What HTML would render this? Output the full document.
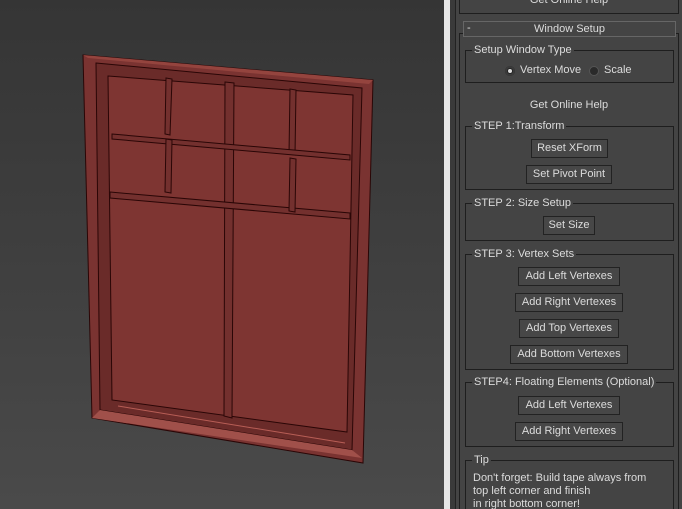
<!DOCTYPE html>
<html><head><style>
*{margin:0;padding:0;box-sizing:border-box}
html,body{width:682px;height:509px;overflow:hidden}
body{background:#444;font-family:"Liberation Sans",sans-serif;font-size:11px;color:#dcdcdc;position:relative}
.vp{position:absolute;left:0;top:0;width:444px;height:509px;background:linear-gradient(#353535 0%,#3f3f3f 50%,#4a4a4a 100%)}
.strip{position:absolute;left:444px;top:0;width:6px;height:509px;background:#e6e6e6}
.dk{position:absolute;left:450px;top:0;width:6px;height:509px;background:#3a3a3a;border-right:1px solid #222}
.b{position:absolute;border:1px solid #1e1e1e}
.g{position:absolute;border:1px solid #1e1e1e;left:465px;width:209px}
.g>.t{position:absolute;left:6px;top:-8px;background:#444;padding:0 2px;line-height:14px}
.btn{position:absolute;border:1px solid #222;background:#474747;text-align:center;line-height:17px;height:19px}
.c{position:absolute;text-align:center}
</style></head><body>
<div class="vp">
<svg width="444" height="509">
<polygon points="83,55 373,80 363,463 92,418" fill="#7a3331" stroke="#2a0606" stroke-width="1"/>
<polygon points="83,55 373,80 369,84 88,58" fill="#94443e"/>
<polygon points="96,63 362,88 352,450 100,410" fill="#6a2b29" stroke="#2a0606"/>
<polygon points="100,410 352,450 362,458 92,418" fill="#a0504a"/>
<polygon points="108,76 353,95 347,432 112,400" fill="#7e3532" stroke="#2a0606"/>
<g stroke="#2a0606" fill="#73302e">
<polygon points="225,82 234,83 232,418 224,416"/>
<polygon points="166,78 172,79 170,135 165,134"/>
<polygon points="290,89 296,90 295,155 289,154"/>
<polygon points="112,134 350,155 350,160 112,139"/>
<polygon points="110,192 350,213 350,219 110,198"/>
<polygon points="166,139 172,140 171,193 165,192"/>
<polygon points="290,158 296,159 295,212 289,211"/>
</g>
<line x1="118" y1="406" x2="345" y2="443" stroke="#b85e56"/>
</svg>
</div>
<div class="strip"></div><div class="dk"></div>
<div class="b" style="left:459px;top:-2px;width:220px;height:16px"></div>
<div class="c" style="left:459px;top:-6px;width:220px">Get Online Help</div>
<div style="position:absolute;left:459px;top:33px;width:220px;height:480px;border:1px solid #1e1e1e;border-bottom:none"></div>
<div class="b" style="left:463px;top:21px;width:213px;height:16px;background:#444;border-color:#666"></div>
<div style="position:absolute;left:467px;top:22px">-</div>
<div class="c" style="left:463px;top:23px;width:213px">Window Setup</div>
<div class="g" style="top:50px;height:33px"><span class="t">Setup Window Type</span></div>
<div style="position:absolute;left:505px;top:66px;width:10px;height:10px;border-radius:50%;background:#222;box-shadow:inset 0 0 0 2px #3a3a3a"><div style="margin:3px;width:4px;height:4px;border-radius:50%;background:#ddd"></div></div>
<div style="position:absolute;left:520px;top:64px">Vertex Move</div>
<div style="position:absolute;left:589px;top:66px;width:10px;height:10px;border-radius:50%;background:#2a2a2a;border:1px solid #555"></div>
<div style="position:absolute;left:604px;top:64px">Scale</div>
<div class="c" style="left:459px;top:99px;width:220px">Get Online Help</div>
<div class="g" style="top:126px;height:64px"><span class="t">STEP 1:Transform</span></div>
<div class="btn" style="left:531px;top:139px;width:77px">Reset XForm</div>
<div class="btn" style="left:526px;top:165px;width:86px">Set Pivot Point</div>
<div class="g" style="top:203px;height:38px"><span class="t">STEP 2: Size Setup</span></div>
<div class="btn" style="left:543px;top:216px;width:52px">Set Size</div>
<div class="g" style="top:254px;height:116px"><span class="t">STEP 3: Vertex Sets</span></div>
<div class="btn" style="left:518px;top:267px;width:102px">Add Left Vertexes</div>
<div class="btn" style="left:515px;top:293px;width:108px">Add Right Vertexes</div>
<div class="btn" style="left:519px;top:319px;width:100px">Add Top Vertexes</div>
<div class="btn" style="left:510px;top:345px;width:118px">Add Bottom Vertexes</div>
<div class="g" style="top:382px;height:65px"><span class="t">STEP4: Floating Elements (Optional)</span></div>
<div class="btn" style="left:518px;top:396px;width:102px">Add Left Vertexes</div>
<div class="btn" style="left:515px;top:422px;width:108px">Add Right Vertexes</div>
<div class="g" style="top:460px;height:60px"><span class="t">Tip</span></div>
<div style="position:absolute;left:473px;top:472px;line-height:13px">Don't forget: Build tape always from<br>top left corner and finish<br>in right bottom corner!</div>
</body></html>
